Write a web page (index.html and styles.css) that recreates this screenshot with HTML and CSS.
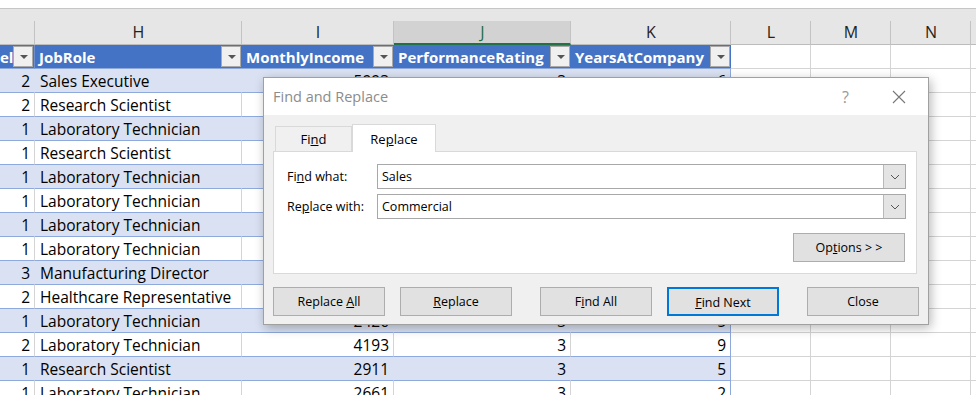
FILE: index.html
```html
<!DOCTYPE html>
<html lang="en">
<head>
    <meta charset="UTF-8">
    <title>Find and Replace</title>
    <link rel="stylesheet" href="styles.css">
</head>
<body>
    <div class="sheet">
        <div class="top-strip"></div>

        <!-- Column letters -->
        <div class="row letters">
            <div class="cell"></div>
            <div class="cell">H</div>
            <div class="cell">I</div>
            <div class="cell sel">J</div>
            <div class="cell">K</div>
            <div class="cell">L</div>
            <div class="cell">M</div>
            <div class="cell">N</div>
            <div class="cell"></div>
        </div>

        <!-- Table header -->
        <div class="row">
            <div class="cell th"><span class="th-text">el</span><span class="flt"></span></div>
            <div class="cell th"><span class="th-text">JobRole</span><span class="flt"></span></div>
            <div class="cell th"><span class="th-text">MonthlyIncome</span><span class="flt"></span></div>
            <div class="cell th"><span class="th-text">PerformanceRating</span><span class="flt"></span></div>
            <div class="cell th"><span class="th-text">YearsAtCompany</span><span class="flt"></span></div>
            <div class="cell"></div><div class="cell"></div><div class="cell"></div><div class="cell"></div>
        </div>

        <div class="row band">
            <div class="cell td num">2</div><div class="cell td">Sales Executive</div><div class="cell td num">5993</div><div class="cell td num">3</div><div class="cell td num">6</div>
            <div class="cell"></div><div class="cell"></div><div class="cell"></div><div class="cell"></div>
        </div>
        <div class="row">
            <div class="cell td num">2</div><div class="cell td">Research Scientist</div><div class="cell td num">5130</div><div class="cell td num">4</div><div class="cell td num">10</div>
            <div class="cell"></div><div class="cell"></div><div class="cell"></div><div class="cell"></div>
        </div>
        <div class="row band">
            <div class="cell td num">1</div><div class="cell td">Laboratory Technician</div><div class="cell td num">2090</div><div class="cell td num">3</div><div class="cell td num">0</div>
            <div class="cell"></div><div class="cell"></div><div class="cell"></div><div class="cell"></div>
        </div>
        <div class="row">
            <div class="cell td num">1</div><div class="cell td">Research Scientist</div><div class="cell td num">2909</div><div class="cell td num">3</div><div class="cell td num">8</div>
            <div class="cell"></div><div class="cell"></div><div class="cell"></div><div class="cell"></div>
        </div>
        <div class="row band">
            <div class="cell td num">1</div><div class="cell td">Laboratory Technician</div><div class="cell td num">3468</div><div class="cell td num">3</div><div class="cell td num">2</div>
            <div class="cell"></div><div class="cell"></div><div class="cell"></div><div class="cell"></div>
        </div>
        <div class="row">
            <div class="cell td num">1</div><div class="cell td">Laboratory Technician</div><div class="cell td num">3068</div><div class="cell td num">3</div><div class="cell td num">7</div>
            <div class="cell"></div><div class="cell"></div><div class="cell"></div><div class="cell"></div>
        </div>
        <div class="row band">
            <div class="cell td num">1</div><div class="cell td">Laboratory Technician</div><div class="cell td num">2670</div><div class="cell td num">4</div><div class="cell td num">1</div>
            <div class="cell"></div><div class="cell"></div><div class="cell"></div><div class="cell"></div>
        </div>
        <div class="row">
            <div class="cell td num">1</div><div class="cell td">Laboratory Technician</div><div class="cell td num">2693</div><div class="cell td num">4</div><div class="cell td num">1</div>
            <div class="cell"></div><div class="cell"></div><div class="cell"></div><div class="cell"></div>
        </div>
        <div class="row band">
            <div class="cell td num">3</div><div class="cell td">Manufacturing Director</div><div class="cell td num">9526</div><div class="cell td num">4</div><div class="cell td num">9</div>
            <div class="cell"></div><div class="cell"></div><div class="cell"></div><div class="cell"></div>
        </div>
        <div class="row">
            <div class="cell td num">2</div><div class="cell td">Healthcare Representative</div><div class="cell td num">5237</div><div class="cell td num">3</div><div class="cell td num">7</div>
            <div class="cell"></div><div class="cell"></div><div class="cell"></div><div class="cell"></div>
        </div>
        <div class="row band">
            <div class="cell td num">1</div><div class="cell td">Laboratory Technician</div><div class="cell td num">2426</div><div class="cell td num">3</div><div class="cell td num">5</div>
            <div class="cell"></div><div class="cell"></div><div class="cell"></div><div class="cell"></div>
        </div>
        <div class="row">
            <div class="cell td num">2</div><div class="cell td">Laboratory Technician</div><div class="cell td num">4193</div><div class="cell td num">3</div><div class="cell td num">9</div>
            <div class="cell"></div><div class="cell"></div><div class="cell"></div><div class="cell"></div>
        </div>
        <div class="row band">
            <div class="cell td num">1</div><div class="cell td">Research Scientist</div><div class="cell td num">2911</div><div class="cell td num">3</div><div class="cell td num">5</div>
            <div class="cell"></div><div class="cell"></div><div class="cell"></div><div class="cell"></div>
        </div>
        <div class="row">
            <div class="cell td num">1</div><div class="cell td">Laboratory Technician</div><div class="cell td num">2661</div><div class="cell td num">3</div><div class="cell td num">2</div>
            <div class="cell"></div><div class="cell"></div><div class="cell"></div><div class="cell"></div>
        </div>
    </div>

    <!-- Find and Replace dialog -->
    <div class="dialog">
        <div class="dlg-title">
            <span class="dlg-caption">Find and Replace</span>
            <span class="dlg-help">?</span>
            <svg class="dlg-x" width="14" height="14" viewBox="0 0 14 14">
                <path d="M1 1 L13 13 M13 1 L1 13" stroke="#777" stroke-width="1.1" fill="none"/>
            </svg>
        </div>
        <div class="dlg-body">
            <div class="tabs">
                <div class="tab">Fi<u>n</u>d</div>
                <div class="tab active">Re<u>p</u>lace</div>
            </div>
            <div class="panel">
                <div class="field">
                    <label>Fi<u>n</u>d what:</label>
                    <div class="combo">
                        <span class="combo-text">Sales</span>
                        <span class="combo-btn"><svg width="10" height="6" viewBox="0 0 10 6"><path d="M1 1 L5 5 L9 1" stroke="#555" fill="none"/></svg></span>
                    </div>
                </div>
                <div class="field">
                    <label>Re<u>p</u>lace with:</label>
                    <div class="combo">
                        <span class="combo-text">Commercial</span>
                        <span class="combo-btn"><svg width="10" height="6" viewBox="0 0 10 6"><path d="M1 1 L5 5 L9 1" stroke="#555" fill="none"/></svg></span>
                    </div>
                </div>
                <div class="options-row">
                    <button class="btn">Op<u>t</u>ions &gt; &gt;</button>
                </div>
            </div>
            <div class="buttons">
                <button class="btn">Replace <u>A</u>ll</button>
                <button class="btn"><u>R</u>eplace</button>
                <button class="btn gap">F<u>i</u>nd All</button>
                <button class="btn default"><u>F</u>ind Next</button>
                <button class="btn gap">Close</button>
            </div>
        </div>
    </div>
</body>
</html>
```

FILE: styles.css
```css
body {
    margin: 0;
    width: 976px;
    height: 395px;
    overflow: hidden;
    background: #fff;
    font-family: "Open Sans", sans-serif;
    position: relative;
}
.sheet {
    padding-top: 8px;
}
.top-strip {
    height: 12px;
    border-top: 1px solid #c6c6c6;
    background: #e6e6e6;
}
.row {
    display: grid;
    grid-template-columns: 35px 207px 152px 177px 160px 80px 80px 80px 1fr;
    height: 24px;
}
.cell {
    box-sizing: border-box;
    border-right: 1px solid #d4d4d4;
    border-bottom: 1px solid #d4d4d4;
    white-space: nowrap;
    overflow: hidden;
    font-size: 15.5px;
    line-height: 25px;
    color: #000;
    padding: 0 4px 0 5px;
}
.letters {
    height: 24px;
    background: #e6e6e6;
}
.letters .cell {
    text-align: center;
    color: #222;
    font-size: 16px;
    line-height: 23px;
    border-right-color: #c3c3c3;
    border-bottom-color: #bcbcbc;
}
.letters .sel {
    background: #d2d2d2;
    color: #1e6b40;
    border-bottom: 2px solid #217346;
}
.th {
    background: #4472c4;
    color: #fff;
    font-weight: bold;
    font-size: 15px;
    display: flex;
    align-items: center;
    justify-content: space-between;
    border-right: none;
    border-bottom-color: #8ea9db;
    padding: 0 1px 0 4px;
}
.th:first-child {
    padding-left: 0;
    border-right: 1px solid #6f8fcc;
}
.th-text {
    line-height: 22px;
}
.flt {
    width: 20px;
    height: 21px;
    box-sizing: border-box;
    background: #f0f0f0;
    border: 1px solid #a9a9a9;
    position: relative;
}
.flt::after {
    content: "";
    position: absolute;
    left: 6px;
    top: 8px;
    border-left: 4px solid transparent;
    border-right: 4px solid transparent;
    border-top: 4px solid #555;
}
.td {
    border-bottom-color: #8ea9db;
}
.td:nth-child(5) {
    border-right-color: #8ea9db;
}
.band .td {
    background: #d9e1f2;
    border-right-color: #d9e1f2;
}
.band .td:nth-child(5) {
    border-right-color: #8ea9db;
}
.num {
    text-align: right;
}

/* dialog */
.dialog {
    position: absolute;
    left: 263px;
    top: 77px;
    width: 666px;
    height: 248px;
    box-sizing: border-box;
    border: 1px solid #a0a0a0;
    background: #f0f0f0;
    box-shadow: 2px 3px 10px rgba(0, 0, 0, 0.28);
    font-family: "Open Sans", sans-serif;
    font-size: 12.5px;
    color: #000;
    display: flex;
    flex-direction: column;
}
.dlg-title {
    height: 37px;
    background: #fff;
    display: flex;
    align-items: center;
    padding: 0 22px 0 9px;
}
.dlg-caption {
    flex: 1;
    font-size: 14.5px;
    color: #8c8c8c;
}
.dlg-help {
    font-size: 16px;
    color: #999;
    margin-right: 43px;
}
.dlg-x {
    display: block;
}
.dlg-body {
    flex: 1;
    padding: 9px 11px 0 9px;
}
.tabs {
    display: flex;
    align-items: flex-end;
    height: 27px;
    padding-left: 2px;
}
.tab {
    width: 77px;
    height: 25px;
    box-sizing: border-box;
    border: 1px solid #d9d9d9;
    border-bottom: none;
    text-align: center;
    line-height: 24px;
    font-size: 13px;
}
.tab.active {
    width: 84px;
    height: 28px;
    background: #fff;
    margin-bottom: -1px;
    position: relative;
    line-height: 28px;
}
.panel {
    height: 123px;
    box-sizing: border-box;
    background: #fff;
    border: 1px solid #d9d9d9;
    padding: 12px 10px 0 13px;
}
.field {
    display: flex;
    align-items: center;
    margin-bottom: 5px;
}
.field label {
    width: 90px;
}
.combo {
    flex: 1;
    height: 25px;
    box-sizing: border-box;
    border: 1px solid #a8a8a8;
    display: flex;
    align-items: center;
}
.combo-text {
    flex: 1;
    padding-left: 4px;
}
.combo-btn {
    width: 21px;
    height: 23px;
    background: #e4e4e4;
    border-left: 1px solid #b9b9b9;
    display: flex;
    align-items: center;
    justify-content: center;
}
.options-row {
    display: flex;
    justify-content: flex-end;
    margin-top: 14px;
    padding-right: 1px;
}
.btn {
    width: 112px;
    height: 29px;
    flex-shrink: 0;
    box-sizing: border-box;
    background: #e1e1e1;
    border: 1px solid #adadad;
    font-family: "Open Sans", sans-serif;
    font-size: 12.5px;
    line-height: 27px;
    color: #000;
    padding: 0;
}
.buttons {
    display: flex;
    margin-top: 13px;
}
.buttons .btn {
    margin-right: 15px;
}
.buttons .btn.gap {
    margin-left: 13px;
}
.buttons .btn.default {
    border: 2px solid #0078d7;
}
.buttons .btn:last-child {
    margin-right: 0;
}
```
